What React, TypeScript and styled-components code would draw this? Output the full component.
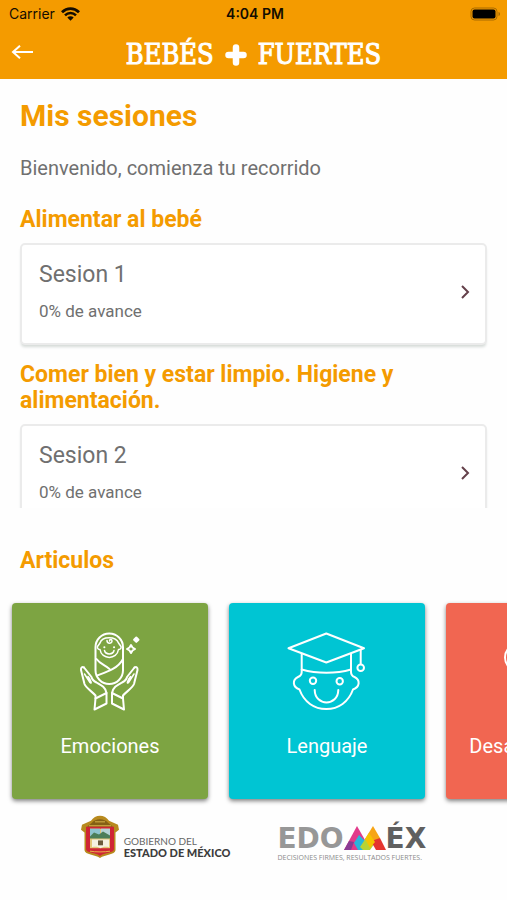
import React from "react";
import styled, { createGlobalStyle } from "styled-components";

const ORANGE = "#f49b00";

const GlobalStyle = createGlobalStyle`
  *, *::before, *::after { box-sizing: border-box; }
  body { margin: 0; background: #fff; font-family: Roboto, "Liberation Sans", sans-serif; }
  h1, h2, p { margin: 0; }
  button { font: inherit; color: inherit; border: 0; padding: 0; cursor: pointer; }
`;

const Screen = styled.div`
  display: flex;
  flex-direction: column;
  height: 100vh;
  background: #fefefe;
`;

const TopBar = styled.header`
  flex: none;
  background: ${ORANGE};
`;

const StatusBar = styled.div`
  display: grid;
  grid-template-columns: 1fr auto 1fr;
  align-items: center;
  height: 27px;
  padding: 0 6px 0 9px;
  color: #140d00;
  font-family: Inter, "Liberation Sans", sans-serif;
  font-size: 14px;
`;

const Carrier = styled.div`
  display: flex;
  align-items: center;
  gap: 6px;
`;

const Clock = styled.time`
  font-weight: 600;
`;

const Battery = styled.svg`
  justify-self: end;
`;

const NavBar = styled.div`
  display: grid;
  grid-template-columns: 44px 1fr 44px;
  align-items: center;
  height: 52px;
`;

const BackButton = styled.button`
  display: grid;
  place-items: center;
  width: 44px;
  height: 48px;
  background: none;
`;

const Brand = styled.div`
  display: flex;
  justify-content: center;
  align-items: center;
  gap: 11px;
  padding-top: 4px;
  color: #fff;
  font-family: "DejaVu Serif Condensed", "DejaVu Serif", serif;
  font-size: 27px;
  line-height: 32px;
  -webkit-text-stroke: 1px #fff;
`;

const Intro = styled.section`
  flex: none;
  padding: 19px 20px 0;
`;

const Title = styled.h1`
  color: ${ORANGE};
  font-size: 30px;
  line-height: 36px;
  font-weight: 700;
`;

const Subtitle = styled.p`
  margin-top: 21px;
  color: #707070;
  font-size: 20px;
  line-height: 26px;
`;

const SectionTitle = styled.h2`
  color: ${ORANGE};
  font-size: 23px;
  line-height: 26px;
  font-weight: 700;
`;

const SessionList = styled.div`
  flex: 1 1 0;
  min-height: 0;
  margin-top: 26px;
  padding: 0 20px;
  overflow-y: auto;
  scrollbar-width: none;
`;

const SessionGroup = styled.section`
  margin-bottom: 17px;
`;

const SessionCard = styled.button`
  display: flex;
  justify-content: space-between;
  align-items: center;
  width: 100%;
  margin-top: 10px;
  padding: 16px 15px 21px 17px;
  text-align: left;
  color: #707070;
  background: #fff;
  border: 2px solid #ebebeb;
  border-radius: 5px;
  box-shadow: 0 3px 3px -1px #d5dad7;
`;

const SessionText = styled.span`
  display: grid;
  gap: 11px;
`;

const SessionName = styled.span`
  font-size: 23px;
  line-height: 28px;
`;

const SessionProgress = styled.span`
  font-size: 17px;
  line-height: 22px;
`;

const Articles = styled.section`
  flex: none;
  padding-top: 40px;
`;

const ArticlesTitle = styled(SectionTitle)`
  padding: 0 20px;
`;

const Carousel = styled.div`
  display: flex;
  gap: 21px;
  padding: 29px 12px 11px;
  overflow-x: auto;
  scrollbar-width: none;
`;

const ArticleCard = styled.button<{ $color: string }>`
  flex: none;
  display: flex;
  flex-direction: column;
  align-items: center;
  gap: 21px;
  width: 196px;
  height: 196px;
  padding-top: 29px;
  color: #fff;
  font-size: 20px;
  line-height: 26px;
  white-space: nowrap;
  background: ${(p) => p.$color};
  border-radius: 4px;
  box-shadow: 0 2px 4px rgba(0, 0, 0, 0.5);
`;

const Icon = styled.svg`
  display: block;
  flex: none;
  fill: none;
  stroke: currentColor;
  stroke-width: 2;
  stroke-linecap: round;
  stroke-linejoin: round;
`;

const Footer = styled.footer`
  flex: none;
  display: flex;
  justify-content: center;
  align-items: flex-start;
  gap: 47px;
  padding: 5px 0 38px;
`;

const StateLogo = styled.div`
  display: flex;
  align-items: flex-start;
  gap: 5px;
`;

const StateName = styled.div`
  padding-top: 20px;
  color: #666;
  font-family: Lato, "Open Sans", sans-serif;
  font-size: 10px;
  line-height: 12px;
`;

const StateNameStrong = styled.strong`
  display: block;
  color: #3c3c3c;
  font-size: 11px;
  font-weight: 900;
`;

const EdomexLogo = styled.div`
  padding-top: 9px;
  font-family: "DejaVu Sans", sans-serif;
`;

const EdomexWord = styled.div`
  display: flex;
  align-items: flex-end;
  font-size: 28px;
  line-height: 30px;
  font-weight: 700;
`;

const WordPart = styled.span<{ $color: string }>`
  color: ${(p) => p.$color};
`;

const MountainMark = styled.svg`
  margin-bottom: 4px;
`;

const Tagline = styled.div`
  color: #8a8a8a;
  font-family: "Open Sans", sans-serif;
  font-size: 7px;
  line-height: 8px;
`;

function BabyIcon() {
  const hand = (
    <>
      <path d="M14 35.500C12 34.500 10.800 35.500 11 38L14.500 52C16 56 22 59.500 25.500 63.500L25.500 66.500" />
      <path d="M14 35.500L21.500 45C22 48 23.500 49 26.500 50.500C31 53 35.500 55 36.500 61" />
      <path d="M14.500 42L20 50.500C22.500 53 20.500 47 18 44.500" strokeWidth="1.500" />
      <path d="M36.500 61L25.500 66.500L24.500 77.500L36.500 71.500Z" />
    </>
  );
  return (
    <Icon width="80" height="80" viewBox="0 0 80 80" aria-hidden="true">
      <rect x="25.500" y="1.500" width="27.500" height="50.500" rx="13.700" />
      <path d="M30 11C32 4 46 4 48.500 11L51 14.500C51.500 16.500 50 17.500 48.500 17.500C47 28 31.500 28 30 17.500C28.500 17.500 27 16.500 27.500 14.500Z" strokeWidth="1.500" />
      <path d="M37 8.500C37 12 42 12 42 9C42 7 39.500 7 39.500 9M34.500 18.500C35.500 23 43 23 44 18.500" strokeWidth="1.500" />
      <path d="M34.300 15.300h.1M44 15.300h.1" />
      <path d="M26.500 27C30 32 35 33 39.500 37M53 27C48 37 35 40.500 27 43.500" />
      {hand}
      <g transform="translate(78.500 0) scale(-1 1)">{hand}</g>
      <path d="M61 13L62.500 15.500L65 17L62.500 18.500L61 21L59.500 18.500L57 17L59.500 15.500Z" />
      <path d="M66.300 5.500L68.500 7.700L66.300 9.900L64.100 7.700Z" fill="currentColor" />
    </Icon>
  );
}

function GraduateIcon() {
  return (
    <Icon width="80" height="80" viewBox="0 0 80 80" aria-hidden="true">
      <path d="M1.500 16.300L39.300 1.500L77 16.300L39.300 30.500Z" />
      <path d="M14.700 22V40C14.700 43 13.500 44 11 45C5 48 5.500 55 12.500 57.500C17 70 27 77 39.300 77C51.500 77 61.500 70 66 57.500C73 55 73.500 48 67.500 45C65 44 64 43 64 40V22" />
      <path d="M14.700 37.500C30 41.800 49 41.800 64 37.500" />
      <path d="M73.700 18V32M27.700 58C28 74.500 51 74.500 51.300 58" />
      <circle cx="73.700" cy="35.700" r="3.300" />
      <circle cx="26" cy="48.700" r="3.200" />
      <circle cx="52.700" cy="49.300" r="3.200" />
    </Icon>
  );
}

function MovementIcon() {
  return (
    <Icon width="80" height="80" viewBox="0 0 80 80" aria-hidden="true">
      <circle cx="15" cy="25.500" r="14" />
      <path d="M24 37C33 42 40 47 50 47L64 34M34 44L28 62L12 76M48 48L52 76" />
    </Icon>
  );
}

function Crest() {
  return (
    <svg width="38" height="43" viewBox="0 0 38 44" preserveAspectRatio="none" role="img" aria-label="Escudo">
      <path d="M1 10L10 6C14 -1 24 -1 28 6L37 10L38 15L34.500 18V36C34 41 24 40 19 44C14 40 4 41 3.500 36V18L0 15Z" fill="#b88a1e" />
      <path d="M11 8C14 3 24 3 27 8L32 12H6Z" fill="#846014" />
      <path d="M14 7h10M8 11h22" stroke="#d9b44a" strokeWidth="1" />
      <path d="M5 12H33V35C33 39 23 38 19 42C15 38 5 39 5 35Z" fill="#cf2535" />
      <path d="M9 14H29V34H9Z" fill="#e3c77a" />
      <path d="M9 14H19V22H9Z" fill="#8fc4cf" />
      <path d="M20 14H29V22H20Z" fill="#b6d3d6" />
      <path d="M9 22L13 18L18 20L22 17L29 21V24H9Z" fill="#4c7e59" />
      <path d="M11 25H28V33C24 32 21 33 19.500 34C18 33 15 32 11 33Z" fill="#f5f0e2" />
      <path d="M17 26h5v5h-5z" fill="#6b5a3d" />
      <path d="M9 37C14 38 24 38 29 37" stroke="#e8b44a" fill="none" />
    </svg>
  );
}

const sessionGroups = [
  { topic: "Alimentar al bebé", name: "Sesion 1", progress: 0 },
  { topic: "Comer bien y estar limpio. Higiene y alimentación.", name: "Sesion 2", progress: 0 },
];

const articles = [
  { label: "Emociones", color: "#7da442", icon: <BabyIcon /> },
  { label: "Lenguaje", color: "#00c5d3", icon: <GraduateIcon /> },
  { label: "Desarrollo motor", color: "#f16651", icon: <MovementIcon /> },
];

export default function App() {
  return (
    <Screen>
      <GlobalStyle />
      <TopBar>
        <StatusBar>
          <Carrier>
            Carrier
            <svg width="19" height="14" viewBox="0 0 19 14" fill="none" stroke="#140d00" aria-label="Wi-Fi">
              <path d="M1 5.200C6 .3 13 .3 18 5.200" strokeWidth="2.800" />
              <path d="M4 8.300C7 5.300 12 5.300 15 8.300" strokeWidth="2.500" />
              <path d="M6.300 10.500C8 8.900 11 8.900 12.700 10.500L9.500 13.700Z" fill="#140d00" stroke="none" />
            </svg>
          </Carrier>
          <Clock>4:04 PM</Clock>
          <Battery width="31" height="14" viewBox="0 0 31 14" aria-label="Batería">
            <rect x="1" y="1" width="26" height="12" rx="3.500" fill="none" stroke="#a86b00" />
            <rect x="2.500" y="2.500" width="23" height="9" rx="2" fill="#000" />
            <path d="M28.500 5C30.500 5.500 30.500 8.500 28.500 9Z" fill="#a86b00" />
          </Battery>
        </StatusBar>
        <NavBar>
          <BackButton aria-label="Volver">
            <svg width="24" height="16" viewBox="0 0 24 16" fill="none" stroke="#fff" strokeWidth="2">
              <path d="M23 7H3M10 .7L3 7L10 13.300" />
            </svg>
          </BackButton>
          <Brand>
            <span>BEBÉS</span>
            <svg width="22" height="22" viewBox="0 0 22 22" role="img" aria-label="más">
              <path d="M11 3.500V18.500M3.500 11H18.500" stroke="#fff" strokeWidth="6.500" strokeLinecap="round" />
            </svg>
            <span>FUERTES</span>
          </Brand>
        </NavBar>
      </TopBar>

      <Intro>
        <Title>Mis sesiones</Title>
        <Subtitle>Bienvenido, comienza tu recorrido</Subtitle>
      </Intro>

      <SessionList>
        {sessionGroups.map((group) => (
          <SessionGroup key={group.name}>
            <SectionTitle>{group.topic}</SectionTitle>
            <SessionCard>
              <SessionText>
                <SessionName>{group.name}</SessionName>
                <SessionProgress>{group.progress}% de avance</SessionProgress>
              </SessionText>
              <svg width="10" height="14" viewBox="0 0 10 14" fill="none" stroke="#64404a" strokeWidth="2" aria-hidden="true">
                <path d="M2 1L8 7L2 13" />
              </svg>
            </SessionCard>
          </SessionGroup>
        ))}
      </SessionList>

      <Articles>
        <ArticlesTitle>Articulos</ArticlesTitle>
        <Carousel>
          {articles.map((article) => (
            <ArticleCard key={article.label} $color={article.color}>
              {article.icon}
              {article.label}
            </ArticleCard>
          ))}
        </Carousel>
      </Articles>

      <Footer>
        <StateLogo>
          <Crest />
          <StateName>
            GOBIERNO DEL
            <StateNameStrong>ESTADO DE MÉXICO</StateNameStrong>
          </StateName>
        </StateLogo>
        <EdomexLogo>
          <EdomexWord>
            <WordPart $color="#979797">EDO</WordPart>
            <MountainMark width="42" height="24" viewBox="0 0 42 24" role="img" aria-label="M">
              <path d="M0 24L13 0L21 14L14 24Z" fill="#e13a8b" />
              <path d="M0 24L5 15L10 16L7 24Z" fill="#8a3c94" />
              <path d="M14 24L10 17L15 9L21 15L19 24Z" fill="#28b5dc" />
              <path d="M19 24L16 21L22 12L27 10L31 17L26 24Z" fill="#b8d334" />
              <path d="M21 13L29 0L36 12L30 19Z" fill="#f7a516" />
              <path d="M30 14L36 12L42 24H32L28 17Z" fill="#e5352e" />
              <path d="M21 13L25 7L31 16L26 22Z" fill="#f5c400" />
            </MountainMark>
            <WordPart $color="#606060">ÉX</WordPart>
          </EdomexWord>
          <Tagline>DECISIONES FIRMES, RESULTADOS FUERTES.</Tagline>
        </EdomexLogo>
      </Footer>
    </Screen>
  );
}
